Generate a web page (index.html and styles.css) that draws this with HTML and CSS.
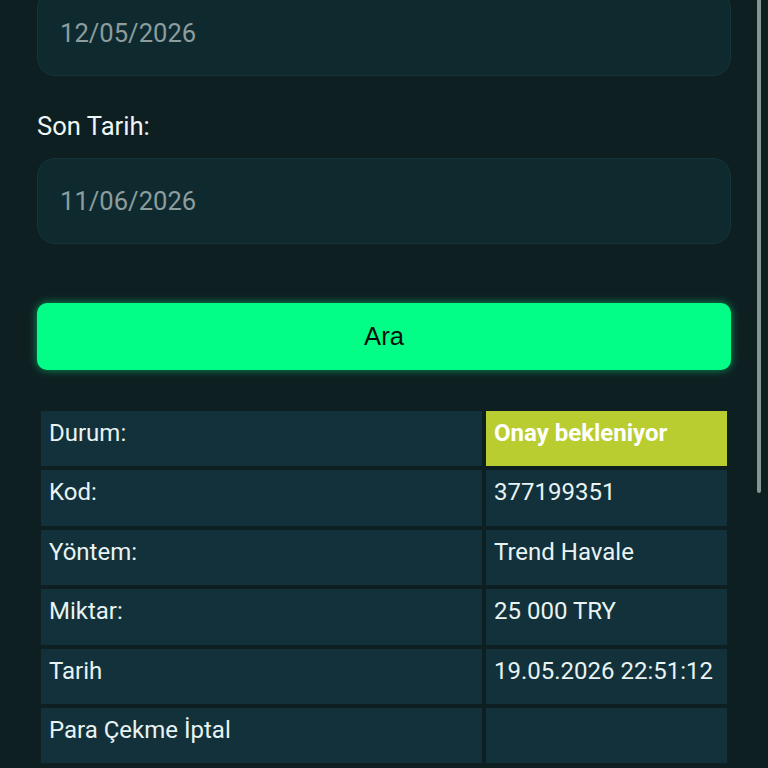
FILE: index.html
```html
<!DOCTYPE html>
<html lang="tr">
  <head>
    <meta charset="UTF-8">
    <meta name="viewport" content="width=device-width, initial-scale=1.0">
    <title>Para Çekme Geçmişi</title>
    <link rel="stylesheet" href="styles.css">
  </head>
  <body>
    <div class="page">
      <input class="date-input" type="text" value="12/05/2026">

      <label class="field-label" for="end-date">Son Tarih:</label>
      <input class="date-input" id="end-date" type="text" value="11/06/2026">

      <button class="search-btn">Ara</button>

      <table class="result-table">
        <colgroup>
          <col class="col-label">
          <col class="col-value">
        </colgroup>
        <tr>
          <td>Durum:</td>
          <td class="status-pending">Onay bekleniyor</td>
        </tr>
        <tr>
          <td>Kod:</td>
          <td>377199351</td>
        </tr>
        <tr>
          <td>Yöntem:</td>
          <td>Trend Havale</td>
        </tr>
        <tr>
          <td>Miktar:</td>
          <td>25 000 TRY</td>
        </tr>
        <tr>
          <td>Tarih</td>
          <td>19.05.2026 22:51:12</td>
        </tr>
        <tr>
          <td>Para Çekme İptal</td>
          <td></td>
        </tr>
      </table>
    </div>
    <div class="scrollbar"></div>
  </body>
</html>
```

FILE: styles.css
```css
html, body {
  margin: 0;
  padding: 0;
  background-color: #0e1f22;
  overflow: hidden;
}

body {
  font-family: Roboto, "Noto Sans", Arial, sans-serif;
  color: #e6f2f2;
}

.page {
  display: flex;
  flex-direction: column;
  padding: 0 37px;
  margin-top: -10px;
}

.field-label {
  display: block;
  font-size: 25.6px;
  line-height: 30px;
  margin-top: 35px;
  color: #eef6f6;
}

.date-input {
  width: 100%;
  height: 86px;
  box-sizing: border-box;
  padding: 0 22px;
  border: 1px solid #15343a;
  border-radius: 18px;
  background-color: #0f2a2f;
  color: #8b9d9e;
  font-family: Roboto, Arial, sans-serif;
  font-size: 25.6px;
  outline: none;
}

.field-label + .date-input {
  margin-top: 17px;
}

.search-btn {
  margin-top: 59px;
  height: 67px;
  width: 100%;
  border: none;
  border-radius: 10px;
  background-color: #02fe86;
  color: #0a0f0e;
  font-family: "Liberation Sans", Arial, sans-serif;
  font-size: 25.6px;
  box-shadow: 0 0 8px rgba(2, 254, 134, 0.55);
  cursor: pointer;
}

.result-table {
  margin-top: 37px;
  width: 100%;
  table-layout: fixed;
  border-collapse: separate;
  border-spacing: 4px;
  font-size: 24px;
}

.col-label {
  width: 441px;
}

.result-table td {
  background-color: #12313a;
  padding: 8px 8px 19px;
  line-height: 28.4px;
  vertical-align: top;
  color: #e8f3f3;
  white-space: nowrap;
}

.result-table td.status-pending {
  background-color: #b9cc30;
  color: #ffffff;
  font-weight: bold;
}

.scrollbar {
  position: fixed;
  top: 0;
  right: 7px;
  width: 4px;
  height: 493px;
  border-radius: 0 0 2px 2px;
  background-color: #869493;
}
```
